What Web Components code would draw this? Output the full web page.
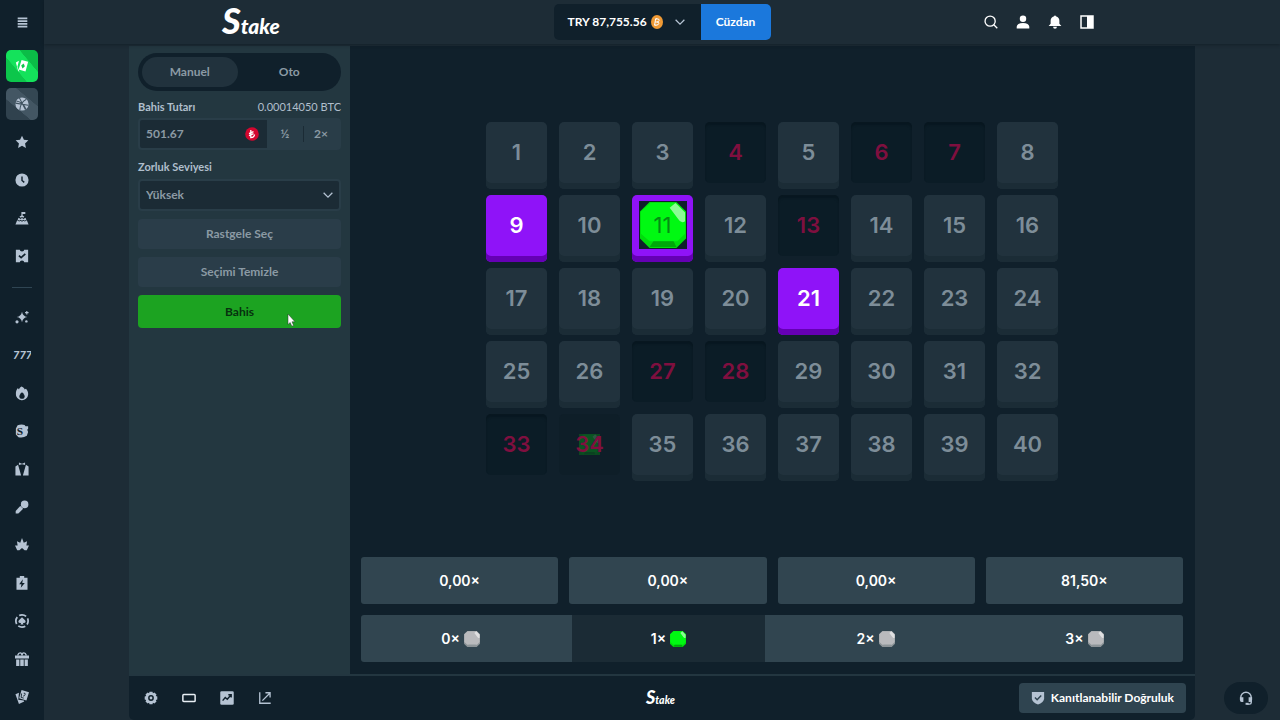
<!DOCTYPE html>
<html lang="tr">
<head>
<meta charset="utf-8">
<title>Stake</title>
<style>
  html, body { margin: 0; min-height: 100%; }
  body { background: #1d2c36; color: #fff; font: 700 12px/16px Lato, "Noto Sans", sans-serif; }
</style>
</head>
<body>
<stake-app></stake-app>
<script>
const RESET = `
  *, *::before, *::after { box-sizing: border-box; }
  button, input, select { font: inherit; color: inherit; margin: 0; border: 0; padding: 0; background: none; }
  a { color: inherit; text-decoration: none; }
  svg { display: block; fill: currentColor; }
`;
const ICONS = {
  menu: '<path d="M1 2h14M1 6h14M1 10h14M1 14h14" stroke="currentColor" stroke-width="2.600"/>',
  star: '<path d="m8 .8 2.200 4.700 5.100.6-3.800 3.500 1 5.200L8 12.300l-4.500 2.500 1-5.200L.7 6.100l5.100-.6z"/>',
  clock: '<path d="M8 .5a7.500 7.500 0 1 0 0 15 7.500 7.500 0 0 0 0-15z"/><path d="M8 4v4.500l2.600 2.200" fill="none" stroke="#10202b" stroke-width="1.600"/>',
  summit: '<path d="M7.300 1h4.500v2.500H8.700V5l2 1.200-1.200 1.500L8 6.800 6.500 7.800 5 6.300 7.300 5z"/><path d="m4.200 7.600 2 1.500L8 8l1.800 1.100 2-1.500 1.200 2.200-1.700 1.200-1.700-1L8 11.200 6.400 10l-1.700 1L3 9.800z"/><path d="m2.500 10.500 2.200 1.600 1.700-1L8 12.300l1.600-1.200 1.700 1 2.200-1.600L15.500 15.500H.5z"/>',
  ticket: '<path d="M1 .8h4.500a2.500 2 0 0 0 5 0H15v14.400h-4.500a2.500 2 0 0 0-5 0H1z"/><path d="m4.500 7.500 2.500 2.400 4.800-4.400" fill="none" stroke="#10202b" stroke-width="1.900"/>',
  sparkle: '<path d="M8 2q.9 5.100 6 6-5.100.9-6 6-.9-5.100-6-6 5.100-.9 6-6z"/><path d="M13.500 1v4M11.500 3h4" stroke="currentColor" stroke-width="1.300"/><circle cx="2.300" cy="13.500" r="1.800"/><circle cx="13" cy="13" r="1.400"/>',
  flame: '<path d="M7.500.5c2.500 1 3.300 2.500 3.600 3.600.4-.8 1-1 1.500-1 2 2.200 2.700 4.600 2.400 7A7 6.600 0 0 1 1 9C.9 6.300 2 4 3 2.700c.8.2 1.300.7 1.500 1.200C5 2.500 6.200 1.300 7.500.5z"/><path d="M8 7.200c2 1.800 3 3.200 3 4.500a3 3 0 0 1-6 0c0-1.300 1-2.700 3-4.500z" fill="#10202b"/>',
  original: '<path d="M3 1.500Q7-.3 11 1l1 1.500h3v3l-1 1 1 2.500-1.500 4.500Q9 16.500 4 15L1 12V5z"/><text x="2" y="12" font-family="Liberation Serif, serif" font-size="13" font-weight="700" fill="#10202b">S</text>',
  tuxedo: '<path d="M4.500.5 8 2l3.500-1.500v3L8 2.500 4.500 3.500zM3.500 3 7 15.500H.5V5zM12.500 3 9 15.500h6.500V5z"/>',
  mic: '<circle cx="11" cy="5" r="4.300"/><path d="m6 6.800 3.300 3.300-5.500 5.400H.8v-3z"/>',
  spikes: '<path d="M8 0 10 5.500l3.800-1.800L13 8.500h3L13.500 14H11l-3-2.500L5 14H2.500L0 8.500h3L2.200 3.700 6 5.500z"/>',
  battery: '<path d="M5.500 0h5v2h3.800v13.800H1.700V2h3.800z"/><path d="M9 3.800 4.800 9.500h2.600l-.8 4L11.200 8H8.300z" fill="#10202b"/>',
  chip: '<circle cx="8" cy="8" r="7" fill="none" stroke="currentColor" stroke-width="2" stroke-dasharray="8.400 2.595" stroke-dashoffset="4.200"/><path d="m8 3.600 3.500 3.600c1.800 2-.6 4-2.500 2.800l.7 2H6.300l.7-2c-1.900 1.200-4.300-.8-2.500-2.800z"/>',
  gift: '<path d="M0 4h16v3.500H0zM1.300 8.500H5V16H1.300zM6 8.500h4V16H6zM11 8.500h3.700V16H11z"/><path d="M3 4Q4 .8 6 1t2 3q0-2.800 2-3t3 3" fill="none" stroke="currentColor" stroke-width="1.600"/>',
  cards: '<path d="m.5 4.800 4-1.600L3.800 11 10 12l.5 1-6 3z"/><path d="M7.500 0 16 2.600 13 12 4.700 9.500z"/><path d="M7.500 4 7 8.500l3 .8M10 3.700q2-.5 1.600 1.300t-2.300 2" fill="none" stroke="#10202b" stroke-width="1"/>',
  search: '<circle cx="7" cy="7" r="5.800" fill="none" stroke="currentColor" stroke-width="1.500"/><path d="m11.200 11.200 4 4" stroke="currentColor" stroke-width="1.500"/>',
  user: '<circle cx="8" cy="4.200" r="3.700"/><path d="M.8 15.500v-2C1 10.500 3.500 9 8 9s7 1.500 7.200 4.500v2z"/>',
  bell: '<path d="M7 1.500a1 1 0 0 1 2 0c2.800.7 4 2.700 4 5V10l2.300 2.500H.7L3 10V6.500c0-2.300 1.200-4.300 4-5zM5.800 13.500h4.400a2.200 2.200 0 0 1-4.400 0z"/>',
  panel: '<path fill-rule="evenodd" d="M.3.300h15.400v15.400H.3zM2 2v12h6V2z"/>',
  chevron: '<path d="m1 4.500 7 7 7-7" fill="none" stroke="currentColor" stroke-width="2"/>',
  gear: '<path fill-rule="evenodd" d="m6.300.8 3.400 0 .5 1.700 1.700-.8 2.400 2.400-.8 1.700 1.700.5v3.400l-1.700.5.8 1.700-2.400 2.400-1.700-.8-.5 1.700H6.300l-.5-1.700-1.700.8-2.400-2.400.8-1.700-1.700-.5V6.300l1.700-.5-.8-1.700 2.400-2.400 1.700.8zM8 4.700a3.300 3.300 0 1 0 0 6.600 3.300 3.300 0 0 0 0-6.600z"/><circle cx="8" cy="8" r="1.600"/>',
  theatre: '<rect x="1" y="4" width="14" height="8" rx="1" fill="none" stroke="#e8eef4" stroke-width="1.700"/>',
  stats: '<rect x=".3" y=".3" width="15.400" height="15.400" rx="1.500"/><path d="m3 11 3-3.500 2.300 2L12.500 4.500M9.500 4.200h3.300v3.300" fill="none" stroke="#10202b" stroke-width="1.600"/>',
  share: '<path d="M2 1.500V14h12.500M5 11l8.500-8.500M8.500 2h5.300v5.300" fill="none" stroke="currentColor" stroke-width="1.500"/>',
  shield: '<path d="M1 1h14v8q-1 4-7 6.500Q2 13 1 9z"/><path d="m4.500 7.500 2.500 2.400 4.700-4.700" fill="none" stroke="#2f4450" stroke-width="1.700"/>',
  headset: '<path d="M2 10V7.500a6 6 0 0 1 12 0V13q0 2-2 2H9.500" fill="none" stroke="currentColor" stroke-width="1.600"/><path d="M1 7h4v5.500H3Q1 12.500 1 10zM15 7h-4v5.500h2Q15 12.500 15 10z"/><rect x="7.500" y="13.500" width="3.500" height="2.300"/>',
  casino: '<path d="m1 4 3.500-2L2.800 8.500 5 14.500q-1-.5-1.500-1.500zM7.500 1 15 3.200 12 14.200 4.200 12z"/><path d="m9.800 5 1.500 3.300-2.700 2.500-1.500-3.300z" fill="#0cc64b"/>',
  sports: '<circle cx="8" cy="8" r="7.500"/><path d="M.5 7 15 9.500M5 1l7 13.500M13 2.500Q6 6 5.500 15M1.500 4.500Q9 5.500 12.500 14" fill="none" stroke="#3f525f" stroke-width="1.200"/>',
};
function define(name, css, html, setup) {
  const template = document.createElement('template');
  template.innerHTML = `<style>${RESET}${css}</style>${html}`;
  customElements.define(name, class extends HTMLElement {
    connectedCallback() {
      if (this.shadowRoot) return;
      const root = this.attachShadow({ mode: 'open' });
      root.append(template.content.cloneNode(true));
      if (setup) setup(this, root);
    }
  });
}

define('ui-icon', `
  :host { display: inline-block; flex: none; width: var(--icon, 14px); height: var(--icon, 14px); }
  svg { width: 100%; height: 100%; overflow: visible; }
`, `<svg viewBox="0 0 16 16" aria-hidden="true"></svg>`, (host, root) => {
  root.querySelector('svg').innerHTML = ICONS[host.getAttribute('name')];
});

define('stake-logo', `
  :host { display: block; width: 60px; height: 32px; }
  :host([small]) { width: 30px; height: 16px; }
  svg { width: 100%; height: 100%; overflow: visible; }
`, `<svg viewBox="0 0 60 32" role="img" aria-label="Stake"><text x="0" y="28" font-family="Lato, sans-serif" font-style="italic" font-weight="900" font-size="21"><tspan font-size="36">S</tspan>take</text></svg>`);

define('gem-mark', `
  :host { display: block; width: 16px; height: 16px; --face: #b9babd; --edge: #8d9498; --base: #8d9498; }
  :host([green]) { --face: #00f912; --edge: #00dd0c; --base: #00a80a; }
  svg { width: 100%; height: 100%; }
`, `<svg viewBox="0 0 48 48" aria-hidden="true">
  <path d="M10 0h28l10 10v28L38 48H10L0 38V10z" fill="var(--edge)"/>
  <path d="M11 1h27l9 9v23l-8 8H10l-9-8V10z" fill="var(--face)"/>
  <path d="M14 41h21l3 6H10z" fill="var(--base)"/>
  <path d="M31 6 37 1l10 10v9q-4 3-7-2z" fill="#fff" opacity=".55"/>
</svg>`);

define('side-nav', `
  :host { display: block; background: #10202b; color: #b5c3d3; }
  nav { display: flex; flex-direction: column; align-items: center; }
  a, button { display: grid; place-items: center; width: 32px; height: 32px; margin: 3px 0; border-radius: 5px; }
  button { margin: 6px 0 9px; --icon: 11px; }
  .casino { color: #fff; background: linear-gradient(50deg, #0cc64b 35%, #14e25b 36% 68%, #0bbd47 69%); }
  .sports { background: linear-gradient(40deg, #30424e 35%, #435663 36% 68%, #344753 69%); }
  hr { width: 20px; height: 1px; border: 0; margin: 12px 0 10px; background: #2f4553; }
  text { font: italic 900 11px Lato, sans-serif; }
`, `<nav aria-label="Menü">
  <button aria-label="Menü"><ui-icon name="menu"></ui-icon></button>
  <a class="casino" href="#casino" aria-label="Casino"><ui-icon name="casino"></ui-icon></a>
  <a class="sports" href="#sports" aria-label="Spor"><ui-icon name="sports"></ui-icon></a>
  <a href="#star" aria-label="Favoriler"><ui-icon name="star"></ui-icon></a>
  <a href="#recent" aria-label="Son oynananlar"><ui-icon name="clock"></ui-icon></a>
  <a href="#summit" aria-label="Zirve"><ui-icon name="summit"></ui-icon></a>
  <a href="#ticket" aria-label="Görevler"><ui-icon name="ticket"></ui-icon></a>
  <hr>
  <a href="#new" aria-label="Yeni"><ui-icon name="sparkle"></ui-icon></a>
  <a href="#slots" aria-label="Slotlar"><svg width="18" height="14" viewBox="0 0 18 14" aria-hidden="true"><text x="0" y="11">777</text></svg></a>
  <a href="#hot" aria-label="Popüler"><ui-icon name="flame"></ui-icon></a>
  <a href="#originals" aria-label="Orijinaller"><ui-icon name="original"></ui-icon></a>
  <a href="#live" aria-label="Canlı casino"><ui-icon name="tuxedo"></ui-icon></a>
  <a href="#shows" aria-label="Oyun şovları"><ui-icon name="mic"></ui-icon></a>
  <a href="#burst" aria-label="Patlama"><ui-icon name="spikes"></ui-icon></a>
  <a href="#bonus" aria-label="Bonus"><ui-icon name="battery"></ui-icon></a>
  <a href="#table" aria-label="Masa oyunları"><ui-icon name="chip"></ui-icon></a>
  <a href="#gift" aria-label="Promosyonlar"><ui-icon name="gift"></ui-icon></a>
  <a href="#cards" aria-label="Kartlar"><ui-icon name="cards"></ui-icon></a>
</nav>`);

define('top-bar', `
  :host { display: block; position: relative; background: #1d2c36; box-shadow: 0 1px 3px #0b151c80; }
  header { display: grid; grid-template-columns: 1fr auto 1fr; align-items: center; height: 44px; max-width: 900px; margin: 0 auto; padding: 0 10px; }
  .wallet { display: flex; height: 36px; border-radius: 5px; overflow: hidden; background: #10202b; }
  .balance { display: flex; align-items: center; gap: 4px; min-width: 147px; padding: 0 16px 0 14px; --icon: 10px; }
  .balance ui-icon { margin-left: auto; color: #b5c3d3; }
  .go { width: 70px; background: #1b78dc; }
  .tools { display: flex; justify-content: flex-end; gap: 2px; }
  .tools button { display: grid; place-items: center; width: 30px; height: 32px; }
`, `<header>
  <a href="#home"><stake-logo></stake-logo></a>
  <div class="wallet">
    <button class="balance">TRY 87,755.56
      <svg width="12" height="14" viewBox="0 0 12 14" aria-hidden="true"><ellipse cx="6" cy="7" rx="6" ry="7" fill="#f09a35"/><path d="m4.600 4-1 6M4 4h2.800q1.700 0 1.300 1.500T6 7H4.200M6 7q2.200 0 1.800 1.600T5.500 10H3M5.800 3l-.1 1M5 10l-.2 1" fill="none" stroke="#fff" stroke-width="1"/></svg>
      <ui-icon name="chevron"></ui-icon></button>
    <button class="go">Cüzdan</button>
  </div>
  <div class="tools">
    <button aria-label="Ara"><ui-icon name="search"></ui-icon></button>
    <button aria-label="Profil"><ui-icon name="user"></ui-icon></button>
    <button aria-label="Bildirimler"><ui-icon name="bell"></ui-icon></button>
    <button aria-label="Panel"><ui-icon name="panel"></ui-icon></button>
  </div>
</header>`);

define('bet-panel', `
  :host { display: block; background: #233740; padding: 7px 9px; color: #8b9aa4; }
  .tabs { display: grid; grid-template-columns: 1fr 1fr; gap: 4px; padding: 4px; border-radius: 19px; background: #10202b; }
  .tabs button { height: 30px; border-radius: 15px; }
  .tabs .on { background: #21323d; }
  .line { display: flex; justify-content: space-between; margin: 8px 0 3px; font-size: 11px; color: #b0bfcc; }
  .line span { font-weight: 400; }
  .amount { display: flex; height: 32px; border: 2px solid #293d48; border-radius: 4px; background: #1b2b35; align-items: center; }
  .amount input { flex: 1; min-width: 0; padding-left: 6px; }
  .amount svg { margin-right: 8px; }
  .amount button { width: 36px; height: 28px; background: #293d48; }
  .amount button + button { position: relative; }
  .amount button + button::before { content: ""; position: absolute; left: 0; top: 6px; width: 1px; height: 16px; background: #1b2b35; }
  label.line { margin-top: 9px; margin-bottom: 4px; }
  .pick { display: grid; align-items: center; height: 32px; border: 2px solid #293d48; border-radius: 4px; background: #1b2b35; --icon: 10px; }
  .pick select { grid-area: 1 / 1; appearance: none; width: 100%; height: 28px; padding-left: 6px; }
  .pick ui-icon { grid-area: 1 / 1; justify-self: end; margin-right: 6px; color: #b5c3d3; pointer-events: none; }
  .act { display: block; width: 100%; height: 30px; margin-top: 8px; border-radius: 4px; background: #2a3d49; }
  .bet { height: 33px; background: #1ca321; color: #07310f; }
`, `<div class="tabs"><button class="on">Manuel</button><button>Oto</button></div>
<div class="line"><label for="amount">Bahis Tutarı</label><span>0.00014050 BTC</span></div>
<div class="amount"><input id="amount" value="501.67">
  <svg width="14" height="14" viewBox="0 0 14 14" aria-hidden="true"><circle cx="7" cy="7" r="6.800" fill="#d3072f"/><path d="M5.800 3v7.500q3.500 0 3.700-3M4 6.600l4.500-2M4 8.600l4.500-2" fill="none" stroke="#fff" stroke-width="1.300"/></svg>
  <button>½</button><button>2×</button></div>
<label class="line" for="level">Zorluk Seviyesi</label>
<div class="pick"><select id="level"><option>Yüksek</option></select><ui-icon name="chevron"></ui-icon></div>
<button class="act">Rastgele Seç</button>
<button class="act">Seçimi Temizle</button>
<button class="act bet">Bahis</button>`);

define('keno-tile', `
  :host { display: block; }
  button { display: grid; place-items: center; width: 100%; height: 67px; padding-bottom: 7px; border-radius: 5px; background: #21323d; box-shadow: inset 0 -6px #1b2c36; color: #7d8d98; font: 600 22px/28px Inter, sans-serif; }
  span, .plate { grid-area: 1 / 1; }
  :host([state="miss"]) button, :host([state="fading"]) button { height: 61px; padding: 0 0 1px; background: #0b1c26; box-shadow: inset 0 3px 2px #081720; color: #7f0f3f; }
  :host([state="picked"]) button, :host([state="hit"]) button { background: #8f13f8; box-shadow: inset 0 -6px #6500b4; color: #fff; }
  :host([state="hit"]) button { color: #068b13; }
  :host([state="fading"]) button { background: #0e1e28; box-shadow: none; }
  .plate { display: none; background: #10202b; padding: 1px; }
  :host([state="hit"]) .plate { display: block; }
  :host([state="hit"]) gem-mark { width: 46px; height: 46px; }
  :host([state="fading"]) .plate { display: block; padding: 0; background: none; opacity: .25; }
  :host([state="fading"]) gem-mark { width: 21px; height: 21px; background: #00c60a; }
  span { position: relative; }
  :host([state="hit"]) span { font-weight: 400; }
`, `<button><div class="plate"><gem-mark green></gem-mark></div><span><slot></slot></span></button>`);

define('keno-board', `
  :host { display: grid; grid-template-columns: repeat(8, minmax(0, 1fr)); grid-auto-rows: 67px; gap: 6px 12px; width: 100%; max-width: 572px; }
`, ``, (host, root) => {
  const states = { 4: 'miss', 6: 'miss', 7: 'miss', 9: 'picked', 11: 'hit', 13: 'miss', 21: 'picked', 27: 'miss', 28: 'miss', 33: 'miss', 34: 'fading' };
  for (let n = 1; n <= 40; n++) {
    const tile = document.createElement('keno-tile');
    tile.textContent = n;
    if (states[n]) tile.setAttribute('state', states[n]);
    root.append(tile);
  }
});

define('pay-table', `
  :host { display: grid; gap: 11px; font: 600 14px/20px Inter, sans-serif; }
  .pays, .hits { display: grid; grid-template-columns: repeat(4, 1fr); }
  .pays { gap: 11px; }
  .pays div { background: #314550; border-radius: 3px; }
  .hits { grid-template-columns: 211fr 193fr 221fr 197fr; background: #314550; border-radius: 3px; overflow: hidden; }
  .pays div, .hits span { display: flex; align-items: center; justify-content: center; gap: 4px; height: 47px; }
  .hits .first { padding-right: 12px; }
  .hits .on { background: #1b2b35; }
`, `<div class="pays"><div>0,00×</div><div>0,00×</div><div>0,00×</div><div>81,50×</div></div>
<div class="hits"><span class="first">0× <gem-mark></gem-mark></span><span class="on">1× <gem-mark green></gem-mark></span><span>2× <gem-mark></gem-mark></span><span>3× <gem-mark></gem-mark></span></div>`);

define('game-footer', `
  :host { display: grid; grid-template-columns: 1fr auto 1fr; align-items: center; height: 46px; padding: 0 9px 0 7px; background: #10202b; border-top: 2px solid #233640; border-radius: 0 0 5px 5px; color: #b5c3d3; }
  .tools { display: flex; gap: 8px; }
  .tools button { display: grid; place-items: center; width: 30px; height: 30px; }
  stake-logo { color: #fff; }
  .fair { justify-self: end; display: flex; align-items: center; gap: 6px; height: 30px; padding: 0 12px; border-radius: 4px; background: #2f4450; }
  .fair span { color: #fff; }
`, `<div class="tools">
  <button aria-label="Ayarlar"><ui-icon name="gear"></ui-icon></button>
  <button aria-label="Tiyatro modu"><ui-icon name="theatre"></ui-icon></button>
  <button aria-label="İstatistikler"><ui-icon name="stats"></ui-icon></button>
  <button aria-label="Paylaş"><ui-icon name="share"></ui-icon></button>
</div>
<stake-logo small></stake-logo>
<button class="fair"><ui-icon name="shield"></ui-icon><span>Kanıtlanabilir Doğruluk</span></button>`);

define('stake-app', `
  :host { display: grid; grid-template-columns: 44px minmax(0, 1fr); min-height: 100vh; }
  .game { display: grid; grid-template-columns: 221px minmax(0, 1fr); grid-template-rows: minmax(628px, 1fr) auto; max-width: 1200px; margin: 0 auto; width: calc(100% - 170px); padding-top: 2px; }
  .page { display: flex; flex-direction: column; }
  main { flex: 1; display: grid; }
  top-bar { z-index: 1; }
  .board { display: flex; flex-direction: column; align-items: center; justify-content: space-between; gap: 24px; padding: 76px 12px 12px 11px; background: #10202b; }
  pay-table { width: 100%; }
  game-footer { grid-column: 1 / -1; }
  .help { position: fixed; right: 12px; bottom: 6px; display: grid; place-items: center; width: 44px; height: 32px; border-radius: 16px; background: #10202b; color: #b5c3d3; }
  .pointer { position: fixed; left: 287px; top: 313px; pointer-events: none; }
`, `<side-nav></side-nav>
<div class="page"><top-bar></top-bar>
<main><div class="game"><bet-panel></bet-panel>
<div class="board"><keno-board></keno-board><pay-table></pay-table></div>
<game-footer></game-footer></div></main></div>
<button class="help" aria-label="Destek"><ui-icon name="headset"></ui-icon></button>
<svg class="pointer" width="9" height="14" viewBox="0 0 9 14" aria-hidden="true"><path d="M1 1v10.500l2.200-2 1.600 3.700 1.800-.8L5 8.800h3z" fill="#fff" stroke="#24352b" stroke-width=".5"/></svg>`);
</script>
</body>
</html>
